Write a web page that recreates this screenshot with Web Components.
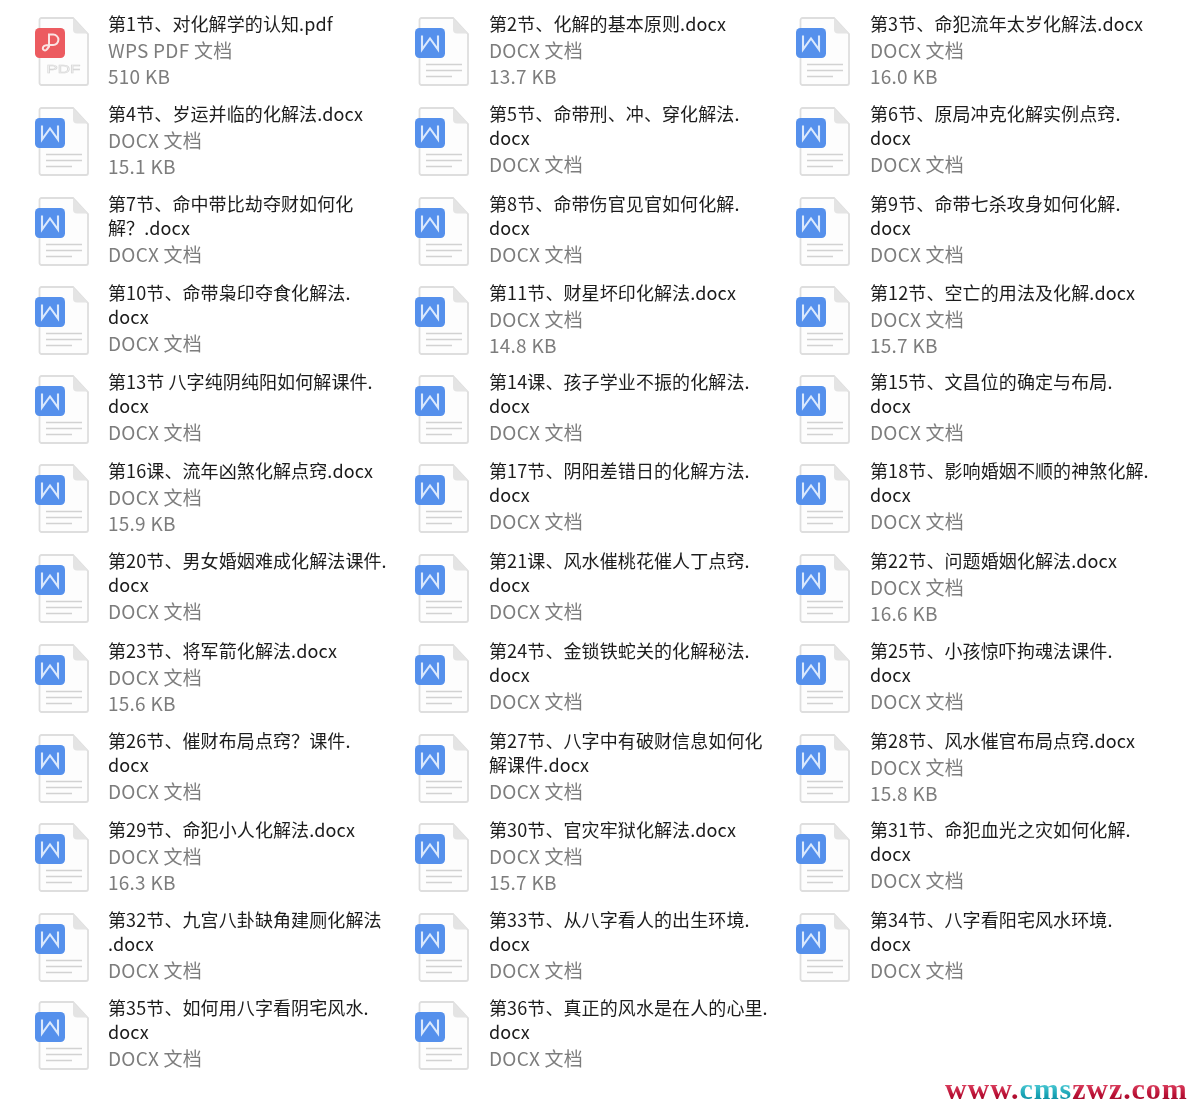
<!DOCTYPE html>
<html lang="zh">
<head>
<meta charset="utf-8">
<title>文件列表</title>
<style>
  html, body { margin: 0; background: #fff; }
  body { font-family: "Noto Sans CJK SC", "Noto Sans", sans-serif; }
</style>
</head>
<body>
<file-grid>
  <file-item kind="pdf" size="510 KB">第1节、对化解学的认知.pdf</file-item>
  <file-item size="13.7 KB">第2节、化解的基本原则.docx</file-item>
  <file-item size="16.0 KB">第3节、命犯流年太岁化解法.docx</file-item>
  <file-item size="15.1 KB">第4节、岁运并临的化解法.docx</file-item>
  <file-item>第5节、命带刑、冲、穿化解法.<br>docx</file-item>
  <file-item>第6节、原局冲克化解实例点窍.<br>docx</file-item>
  <file-item>第7节、命中带比劫夺财如何化<br>解？.docx</file-item>
  <file-item>第8节、命带伤官见官如何化解.<br>docx</file-item>
  <file-item>第9节、命带七杀攻身如何化解.<br>docx</file-item>
  <file-item>第10节、命带枭印夺食化解法.<br>docx</file-item>
  <file-item size="14.8 KB">第11节、财星坏印化解法.docx</file-item>
  <file-item size="15.7 KB">第12节、空亡的用法及化解.docx</file-item>
  <file-item>第13节 八字纯阴纯阳如何解课件.<br>docx</file-item>
  <file-item>第14课、孩子学业不振的化解法.<br>docx</file-item>
  <file-item>第15节、文昌位的确定与布局.<br>docx</file-item>
  <file-item size="15.9 KB">第16课、流年凶煞化解点窍.docx</file-item>
  <file-item>第17节、阴阳差错日的化解方法.<br>docx</file-item>
  <file-item>第18节、影响婚姻不顺的神煞化解.<br>docx</file-item>
  <file-item>第20节、男女婚姻难成化解法课件.<br>docx</file-item>
  <file-item>第21课、风水催桃花催人丁点窍.<br>docx</file-item>
  <file-item size="16.6 KB">第22节、问题婚姻化解法.docx</file-item>
  <file-item size="15.6 KB">第23节、将军箭化解法.docx</file-item>
  <file-item>第24节、金锁铁蛇关的化解秘法.<br>docx</file-item>
  <file-item>第25节、小孩惊吓拘魂法课件.<br>docx</file-item>
  <file-item>第26节、催财布局点窍？课件.<br>docx</file-item>
  <file-item>第27节、八字中有破财信息如何化<br>解课件.docx</file-item>
  <file-item size="15.8 KB">第28节、风水催官布局点窍.docx</file-item>
  <file-item size="16.3 KB">第29节、命犯小人化解法.docx</file-item>
  <file-item size="15.7 KB">第30节、官灾牢狱化解法.docx</file-item>
  <file-item>第31节、命犯血光之灾如何化解.<br>docx</file-item>
  <file-item>第32节、九宫八卦缺角建厕化解法<br>.docx</file-item>
  <file-item>第33节、从八字看人的出生环境.<br>docx</file-item>
  <file-item>第34节、八字看阳宅风水环境.<br>docx</file-item>
  <file-item>第35节、如何用八字看阴宅风水.<br>docx</file-item>
  <file-item>第36节、真正的风水是在人的心里.<br>docx</file-item>
</file-grid>
<site-mark></site-mark>

<script>
// 文档图标：页面外框 + 折角 + 左上角的色块
const PAGE = `
  <path d="M5.500 8a2 2 0 0 1 2-2H39l15 16v49a2 2 0 0 1-2 2H7.500a2 2 0 0 1-2-2z" fill="#fdfdfd" stroke="#dedede" stroke-width="1.800"/>
  <path d="M39 6v11.500a4 4 0 0 0 4 4h11z" fill="#e4e4e4"/>`;

const ICONS = {
  docx: PAGE + `
    <path d="M12 52.500h36M12 58.500h36M12 64.500h26" stroke="#d2d2d2" stroke-width="1.300"/>
    <rect x="1" y="16" width="30" height="30" rx="4.500" fill="#5590ec"/>
    <path d="M8 23.500v14l8-11 8 11v-14" fill="none" stroke="#dbe9fd" stroke-width="2.100"/>`,
  pdf: PAGE + `
    <text x="12.500" y="61" textLength="34" lengthAdjust="spacingAndGlyphs" font-family="Liberation Sans, sans-serif" font-size="11.500" fill="none" stroke="#d6d6d6" stroke-width=".6">PDF</text>
    <rect x="1" y="16" width="30" height="30" rx="4.500" fill="#ec5b60"/>
    <path d="M15 35.500V22.600h4.200a5.100 5.100 0 0 1 0 10.400h-3.700c-3.200 0-6.700.8-6.700 3.300 0 1.800 2 2.700 3.400 1.700 1.600-1.100 2.800-3.700 2.800-6" fill="none" stroke="#fbe3e3" stroke-width="2"/>`
};

class FileGrid extends HTMLElement {
  constructor() {
    super();
    this.attachShadow({ mode: 'open' });
    this.shadowRoot.innerHTML = `
      <style>
        :host {
          display: grid;
          grid-template-columns: repeat(3, 381px);
          grid-template-rows: 90px 90px 89px 89px 89px 90px 90px 90px 89px 90px 88px 89px;
          padding: 11px 0 0 34px;
          filter: blur(.3px);
        }
      </style>
      <slot></slot>`;
  }
}

class FileItem extends HTMLElement {
  constructor() {
    super();
    this.attachShadow({ mode: 'open' });
  }

  connectedCallback() {
    const kind = this.getAttribute('kind') || 'docx';
    const size = this.getAttribute('size');
    const label = kind === 'pdf' ? 'WPS PDF 文档' : 'DOCX 文档';

    this.shadowRoot.innerHTML = `
      <style>
        :host { display: flex; gap: 14px; min-width: 0; }
        svg { flex: none; width: 60px; height: 76px; margin-top: 1px; }
        /* 第二、三列的图标比文字偏左 1px */
        :host(:nth-child(3n+2)) svg, :host(:nth-child(3n)) svg { margin: 1px 1px 0 -1px; }
        .name {
          font-size: 18px;
          line-height: 24px;
          letter-spacing: .1px;
          color: #1c1c1c;
          white-space: nowrap;
          margin-bottom: 2px;
        }
        .meta {
          font-size: 19px;
          line-height: 26px;
          letter-spacing: .25px;
          color: #7d7d7d;
          white-space: nowrap;
        }
      </style>
      <svg viewBox="0 0 60 76" aria-hidden="true">${ICONS[kind]}</svg>
      <div>
        <div class="name"><slot></slot></div>
        <div class="meta">${label}</div>
        ${size ? `<div class="meta">${size}</div>` : ''}
      </div>`;
  }
}

class SiteMark extends HTMLElement {
  constructor() {
    super();
    this.attachShadow({ mode: 'open' });
    this.shadowRoot.innerHTML = `
      <style>
        :host {
          position: absolute;
          left: 945px;
          top: 1073px;
          font: bold 30px/32px "Liberation Serif", serif;
          letter-spacing: .9px;
          white-space: nowrap;
        }
        span {
          -webkit-background-clip: text;
          background-clip: text;
          color: transparent;
          background-image: linear-gradient(#e8506e 25%, #b80f33 70%, #8c0a26);
        }
        .c { background-image: linear-gradient(#5fd6de 25%, #16a2b4 70%, #0d7f92); }
      </style>
      <span>www.</span><span class="c">cms</span><span>zwz.com</span>`;
  }
}

customElements.define('file-grid', FileGrid);
customElements.define('file-item', FileItem);
customElements.define('site-mark', SiteMark);
</script>
</body>
</html>
